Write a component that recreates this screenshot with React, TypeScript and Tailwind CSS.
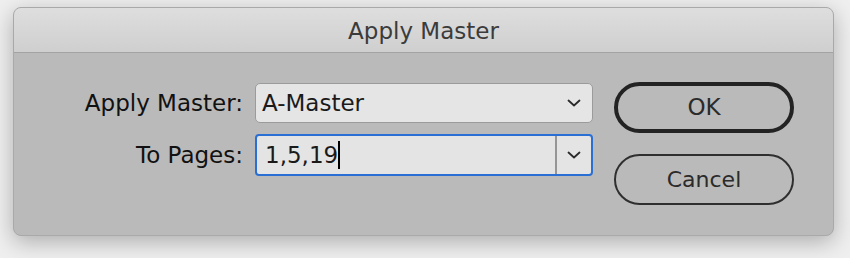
import React from "react";

function Chevron() {
  return (
    <svg width="14" height="8" viewBox="0 0 14 8" fill="none">
      <path d="M1.5 1.5 L7 6.5 L12.5 1.5" stroke="#2a2a2a" strokeWidth="1.8" strokeLinecap="round" strokeLinejoin="round" />
    </svg>
  );
}

export default function App() {
  const font = { fontFamily: '"DejaVu Sans", "Noto Sans", sans-serif' };
  return (
    <div className="w-[850px] h-[258px] bg-[#efefef] pt-[7px] pl-[13px]" style={font}>
      <div className="w-[821px] h-[229px] rounded-[8px] border border-[#a9a9a9] bg-[#bababa] shadow-[0_6px_22px_rgba(0,0,0,0.28)] overflow-hidden flex flex-col">
        <div className="h-[45px] shrink-0 border-b border-[#a3a3a3] bg-gradient-to-b from-[#dedede] to-[#cfcfcf] flex items-center justify-center">
          <span className="text-[23px] text-[#3b3b3b] leading-none mt-[2px]">Apply Master</span>
        </div>
        <div className="flex items-start pt-[29px]">
          <div className="grid grid-cols-[229px_338px] gap-x-[12px] gap-y-[11px] mt-[1px]">
            <div className="h-[40px] flex items-center justify-end text-[23px] text-[#111]">Apply Master:</div>
            <div className="h-[40px] rounded-[5px] border-[1.5px] border-[#9b9b9b] bg-[#e5e5e5] flex items-center justify-between pl-[6px] pr-[11px]">
              <span className="text-[23px] text-[#1a1a1a]">A-Master</span>
              <Chevron />
            </div>
            <div className="h-[42px] flex items-center justify-end text-[23px] text-[#111]">To Pages:</div>
            <div className="h-[42px] rounded-[4px] border-2 border-[#2a6fd3] bg-[#e4e4e4] flex items-stretch">
              <div className="flex-1 flex items-center pl-[8px]">
                <span className="text-[23px] text-[#1a1a1a]">1,5,19</span>
                <span className="w-[2px] h-[28px] bg-black" />
              </div>
              <div className="w-[36px] border-l-2 border-[#959595] flex items-center justify-center">
                <Chevron />
              </div>
            </div>
          </div>
          <div className="ml-[21px] flex flex-col gap-[21px]">
            <div className="w-[180px] h-[51px] rounded-full border-[4px] border-[#232323] flex items-center justify-center text-[23px] text-[#2b2b2b]">OK</div>
            <div className="w-[180px] h-[51px] rounded-full border-2 border-[#2f2f2f] flex items-center justify-center text-[22px] text-[#2b2b2b]">Cancel</div>
          </div>
        </div>
      </div>
    </div>
  );
}
